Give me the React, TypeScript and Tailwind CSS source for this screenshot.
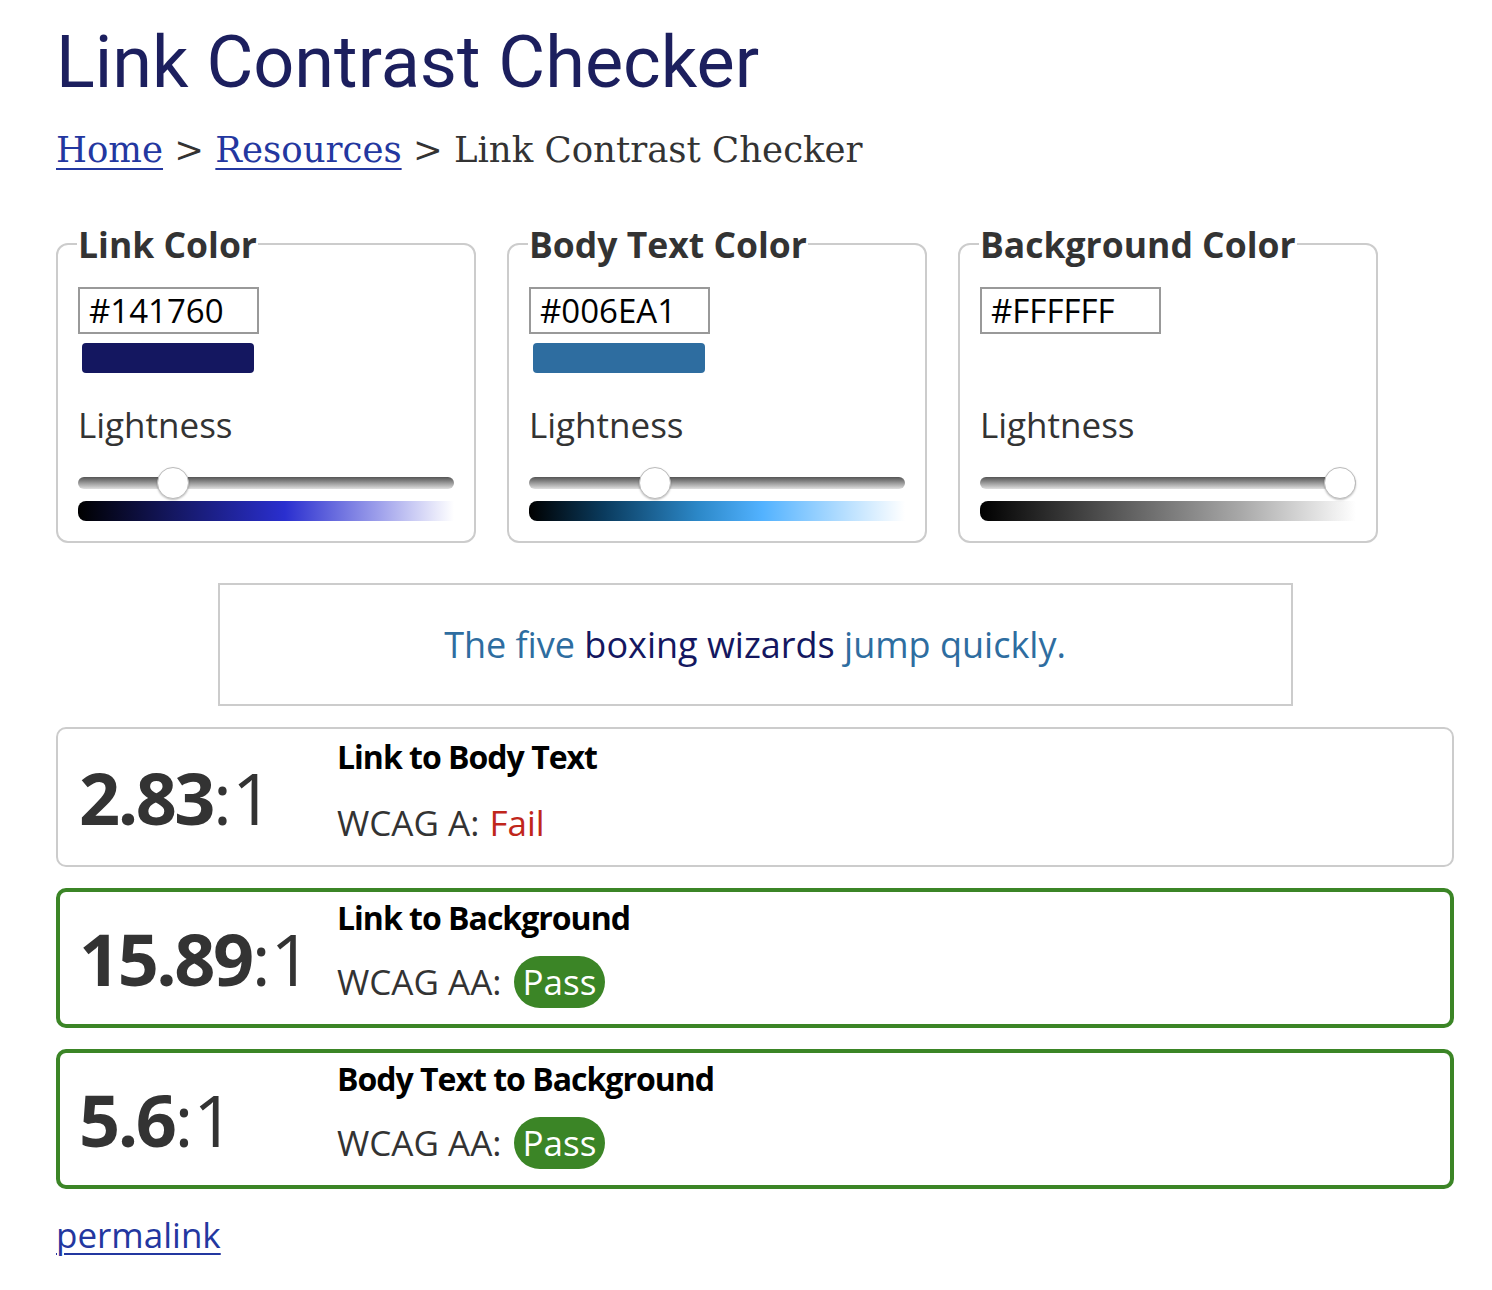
import React from "react";

type ColorBoxProps = {
  title: string;
  hex: string;
  swatch?: string;
  thumb: number;
  gradient: string;
};

const ColorBox: React.FC<ColorBoxProps> = ({ title, hex, swatch, thumb, gradient }) => {
  return (
    <fieldset className="w-[420px] rounded-[12px] border-2 border-[#cccccc] px-[20px] pb-[20px] pt-0">
      <legend className="px-[1px] text-[35.5px] font-bold leading-[44px] text-[#333333] -ml-[1px]">
        {title}
      </legend>
      <div className="mt-[21px] flex h-[47px] w-[181px] items-center border-2 border-[#999999] px-[9px] text-[33px] text-black">
        {hex}
      </div>
      <div
        className="ml-[4px] mt-[9px] h-[30px] w-[172px] rounded-[4px]"
        style={{ background: swatch ?? "transparent" }}
      />
      <div className="mt-[30px] text-[35px] leading-[44px] text-[#333333]">Lightness</div>
      <div className="relative mt-[21px] h-[40px]">
        <div className="absolute left-0 right-0 top-[9px] h-[12px] rounded-full bg-gradient-to-b from-[#555555] via-[#999999] to-[#e0e0e0]" />
        <div
          className="absolute top-[-1px] h-[32px] w-[32px] -translate-x-1/2 rounded-full border border-[#bbbbbb] bg-white shadow-[0_1px_2px_rgba(0,0,0,0.25)]"
          style={{ left: `calc(16px + (100% - 32px) * ${thumb})` }}
        />
      </div>
      <div className="-mt-[7px] h-[20px] rounded-l-[8px]" style={{ background: gradient }} />
    </fieldset>
  );
};

type ResultProps = {
  big: string;
  title: string;
  level: string;
  pass: boolean;
};

const Result: React.FC<ResultProps> = ({ big, title, level, pass }) => {
  return (
    <div
      className={
        pass
          ? "flex h-[140px] items-stretch rounded-[10px] border-4 border-[#3b8526] px-[19px]"
          : "flex h-[140px] items-stretch rounded-[10px] border-2 border-[#cccccc] px-[21px]"
      }
    >
      <div className="flex w-[258px] shrink-0 items-center text-[72px] leading-none text-[#333333]">
        <span className="font-bold tracking-[-2.5px]">{big}</span>
        <span>:1</span>
      </div>
      <div className={pass ? "flex flex-col pt-[6px]" : "flex flex-col pt-[8px]"}>
        <div className="text-[32px] font-bold leading-[40px] tracking-[-1px] text-black">{title}</div>
        <div
          className={
            pass
              ? "mt-[18px] flex items-center text-[35px] leading-[44px] text-[#333333]"
              : "mt-[24px] flex items-center text-[35px] leading-[44px] text-[#333333]"
          }
        >
          <span>WCAG {level}:</span>
          {pass ? (
            <span className="ml-[12px] rounded-full bg-[#3b8526] px-[9px] leading-[52px] text-white">Pass</span>
          ) : (
            <span className="ml-[10px] text-[#c0261b]">Fail</span>
          )}
        </div>
      </div>
    </div>
  );
};

export default function App() {
  return (
    <div className="min-h-screen bg-white pb-[30px] pl-[56px] pr-[38px] font-['Open_Sans',sans-serif]">
      <h1 className="pt-[20px] font-['Roboto',sans-serif] text-[72px] leading-[86px] text-[#1c1f5e]">
        Link Contrast Checker
      </h1>
      <div className="mt-[22px] font-['DejaVu_Serif',serif] text-[35.5px] leading-[44px] text-[#333333]">
        <a href="#" className="text-[#2337a0] underline decoration-2 underline-offset-[6px]">Home</a>
        {" > "}
        <a href="#" className="text-[#2337a0] underline decoration-2 underline-offset-[6px]">Resources</a>
        {" > Link Contrast Checker"}
      </div>

      <div className="mt-[50px] flex gap-[31px]">
        <ColorBox
          title="Link Color"
          hex="#141760"
          swatch="#141760"
          thumb={0.23}
          gradient="linear-gradient(to right, #000000, #141760 25%, #2a2fcf 55%, #9ea0eb 80%, #ffffff)"
        />
        <ColorBox
          title="Body Text Color"
          hex="#006EA1"
          swatch="#2e6da0"
          thumb={0.32}
          gradient="linear-gradient(to right, #000000, #0a3b5e 20%, #2c88c8 45%, #52b2ff 62%, #ffffff)"
        />
        <ColorBox
          title="Background Color"
          hex="#FFFFFF"
          thumb={1}
          gradient="linear-gradient(to right, #000000, #555555 35%, #aaaaaa 70%, #ffffff)"
        />
      </div>

      <div className="mx-auto mt-[40px] flex h-[123px] w-[1075px] items-center justify-center border-2 border-[#cccccc] text-[36px] text-[#2e6da0]">
        <span>
          The five <span className="text-[#141760]">boxing wizards</span> jump quickly.
        </span>
      </div>

      <div className="mt-[21px] flex flex-col gap-[21px]">
        <Result big="2.83" title="Link to Body Text" level="A" pass={false} />
        <Result big="15.89" title="Link to Background" level="AA" pass={true} />
        <Result big="5.6" title="Body Text to Background" level="AA" pass={true} />
      </div>

      <div className="mt-[24px] text-[35px] leading-[44px]">
        <a href="#" className="text-[#2337a0] underline decoration-2 underline-offset-[5px]">permalink</a>
      </div>
    </div>
  );
}
